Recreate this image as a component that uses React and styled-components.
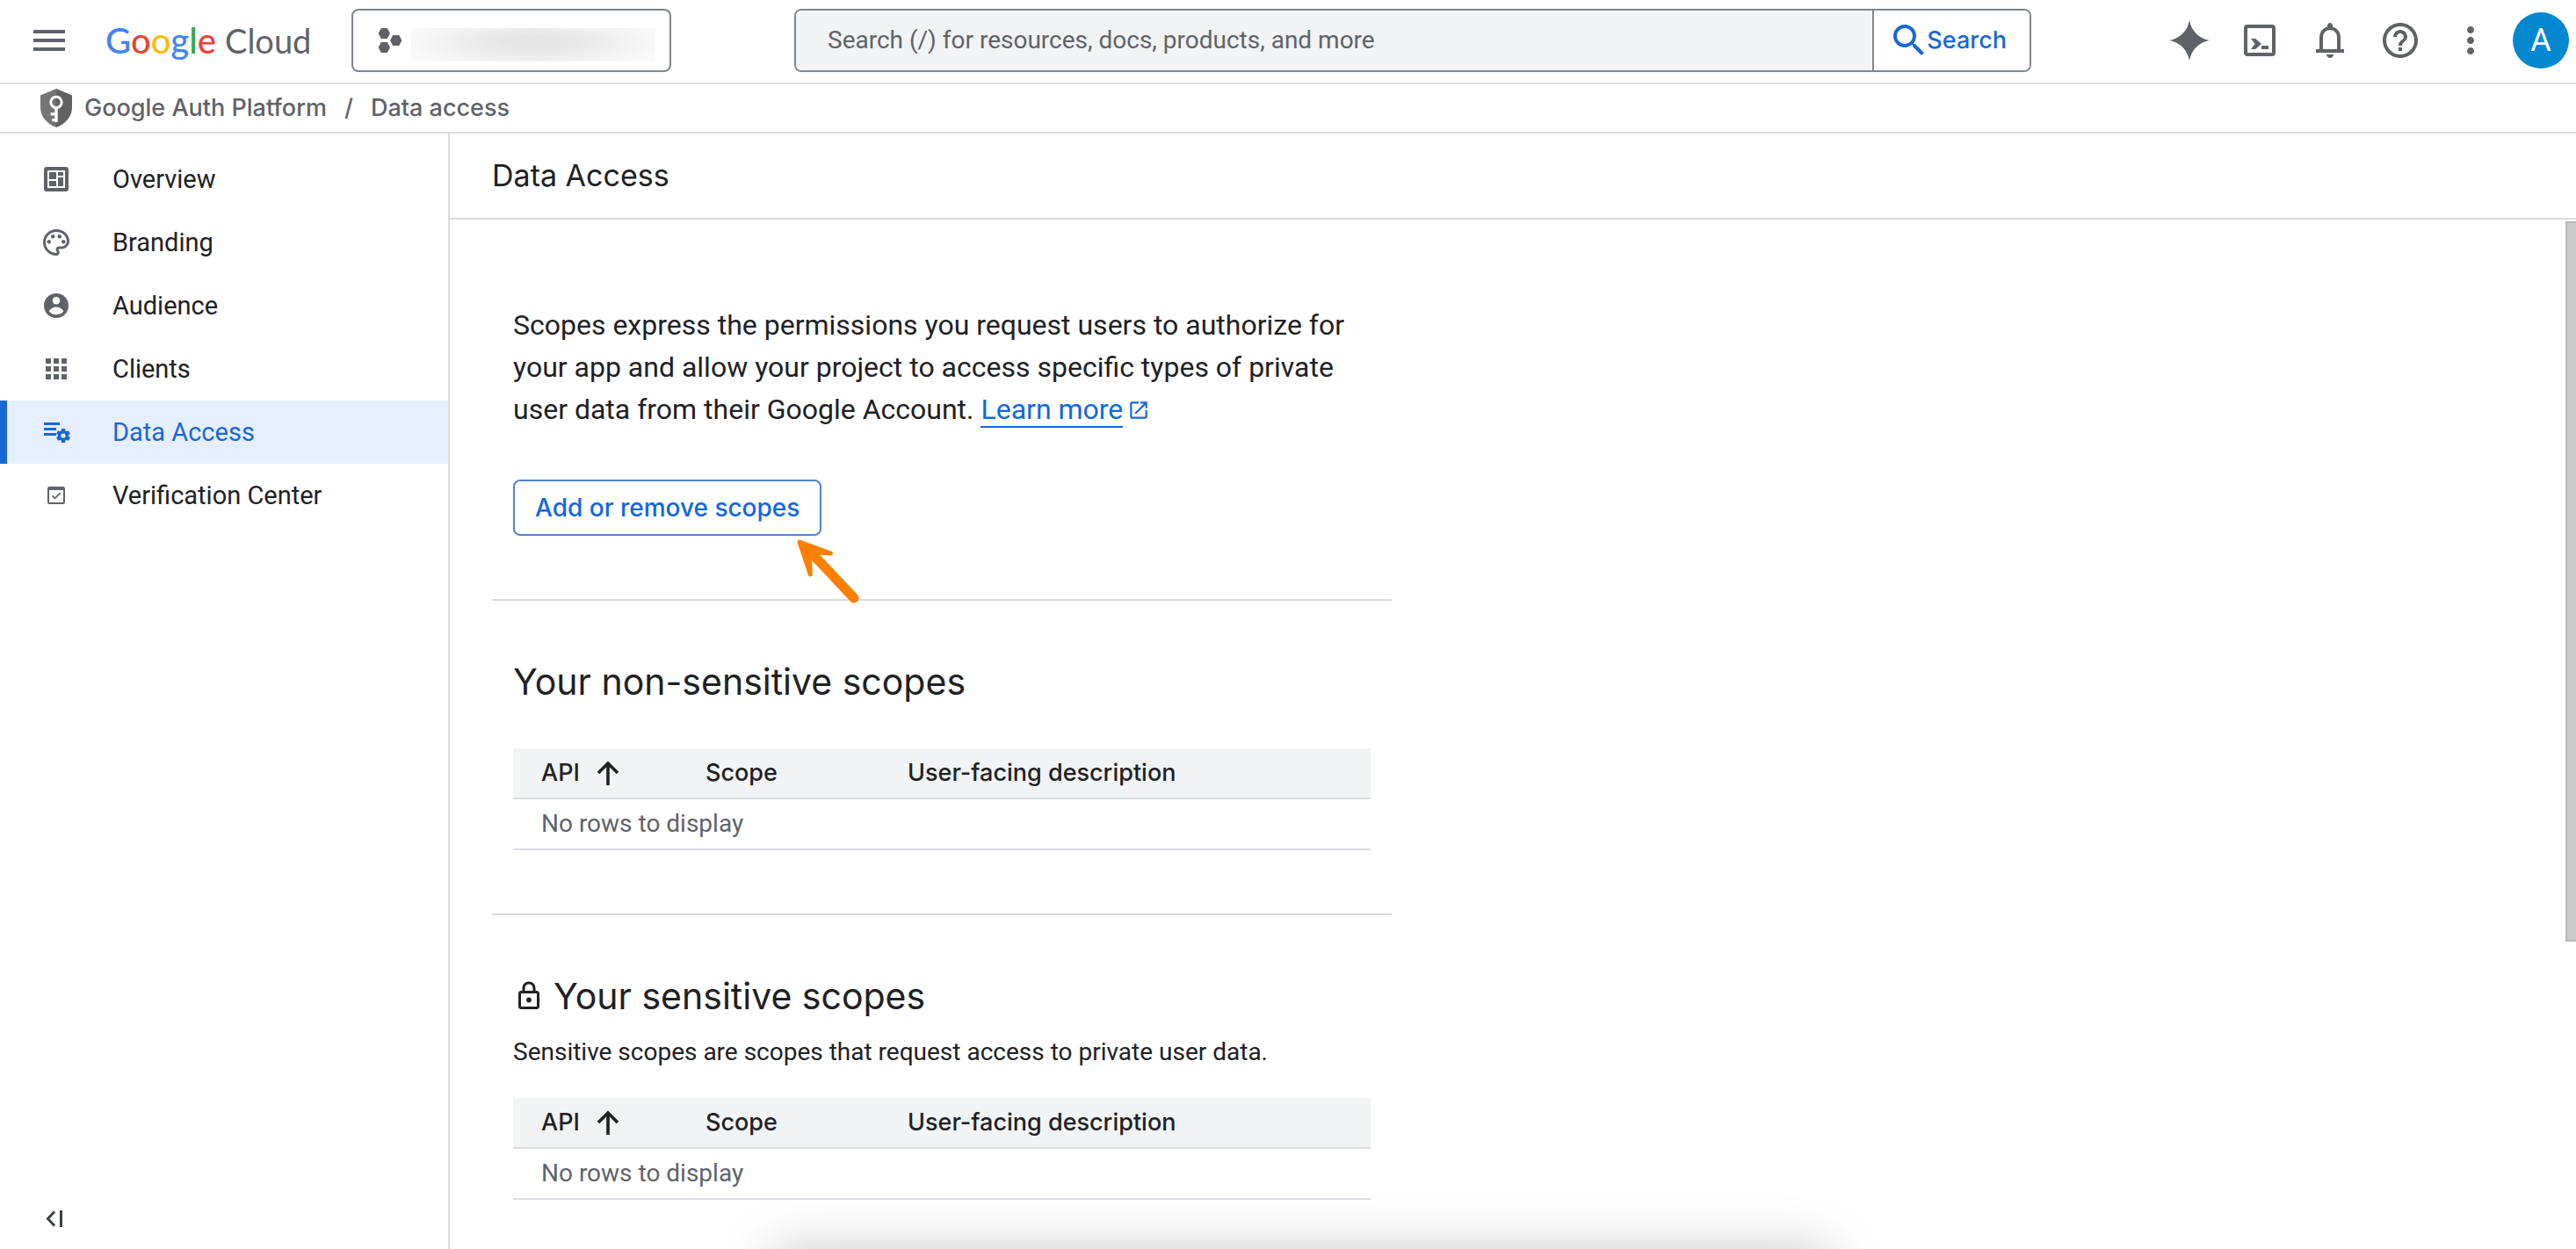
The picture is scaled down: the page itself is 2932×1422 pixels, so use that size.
import React from "react";
import styled, { createGlobalStyle } from "styled-components";
import {
  MdApps,
  MdHelpOutline,
  MdMenu,
  MdMoreVert,
  MdOpenInNew,
  MdOutlineLock,
  MdOutlinePalette,
  MdSearch,
} from "react-icons/md";

const color = {
  text: "#202124",
  muted: "#5f6368",
  line: "#dadce0",
  outline: "#80868b",
  surface: "#f1f3f4",
  link: "#1267e0",
  active: "#1a67d4",
  activeBg: "#e6efff",
  avatar: "#0288d1",
};

const font = {
  body: 'Roboto, "Liberation Sans", sans-serif',
  display: 'Inter, "Liberation Sans", sans-serif',
  brand: 'Lato, "Liberation Sans", sans-serif',
};

const GlobalStyle = createGlobalStyle`
  *, *::before, *::after { box-sizing: border-box; }
  body {
    margin: 0;
    background: #fff;
    color: ${color.text};
    font: 400 28px/40px ${font.body};
  }
  button, input { font: inherit; color: inherit; }
  button { cursor: pointer; }
  h1, h2, p, ul, ol { margin: 0; padding: 0; }
  ul, ol { list-style: none; }
  a { color: inherit; text-decoration: none; }
  svg { display: block; flex: none; }
`;

const Page = styled.div`
  position: relative;
  display: flex;
  flex-direction: column;
  height: 100vh;
  overflow: hidden;
`;

/* ---------- top bar ---------- */

const TopBar = styled.header`
  display: flex;
  align-items: center;
  flex: none;
  height: 96px;
  padding: 0 8px 2px 32px;
  border-bottom: 2px solid ${color.line};
`;

const IconButton = styled.button`
  display: flex;
  padding: 0;
  border: 0;
  background: none;
  color: ${color.muted};
`;

const Brand = styled.a`
  display: flex;
  align-items: baseline;
  gap: 10px;
  flex: none;
  width: 280px;
  margin-left: 40px;
  color: ${color.muted};
  font: 400 38px/48px ${font.brand};
`;

const BrandName = styled.span`
  font-size: 40px;
  font-weight: 500;
`;

const Letter = styled.span`
  color: ${(p) => p.$tone};
`;

const ProjectPicker = styled.button`
  display: flex;
  align-items: center;
  gap: 10px;
  flex: 0 1 364px;
  height: 72px;
  padding: 0 16px 0 28px;
  border: 2px solid ${color.outline};
  border-radius: 8px;
  background: #fff;
  color: ${color.muted};
`;

const HiddenName = styled.span`
  flex: 1;
  height: 38px;
  margin-top: 10px;
  background: radial-gradient(ellipse 54% 90% at 50% 42%, #e6e6e6 20%, #f9f9f9 100%);
`;

const SearchForm = styled.form`
  display: flex;
  flex: 0 1 1408px;
  height: 72px;
  margin-left: 140px;
  border: 2px solid ${color.outline};
  border-radius: 8px;
  overflow: hidden;
`;

const SearchInput = styled.input`
  flex: 1;
  min-width: 0;
  padding: 0 36px;
  border: 0;
  outline: 0;
  background: ${color.surface};
  &::placeholder {
    color: ${color.muted};
    opacity: 1;
  }
`;

const SearchButton = styled.button`
  display: flex;
  align-items: center;
  padding: 0 26px 0 16px;
  border: 0;
  border-left: 2px solid ${color.outline};
  background: #fff;
  color: ${color.active};
  font: 500 27px/40px ${font.display};
  svg { margin-right: -4px; }
`;

const Tools = styled.div`
  display: flex;
  align-items: center;
  gap: 32px;
  margin-left: auto;
`;

const Avatar = styled.button`
  width: 64px;
  height: 64px;
  margin-left: -8px;
  padding: 0;
  border: 0;
  border-radius: 50%;
  background: ${color.avatar};
  color: #fff;
  font-size: 36px;
`;

/* ---------- breadcrumb ---------- */

const Breadcrumb = styled.nav`
  display: flex;
  align-items: center;
  gap: 14px;
  flex: none;
  height: 56px;
  padding: 0 46px;
  border-bottom: 2px solid ${color.line};
  color: ${color.muted};
  font: 500 27px/40px ${font.display};
`;

const Trail = styled.ol`
  display: flex;
  gap: 20px;
`;

/* ---------- body ---------- */

const Body = styled.div`
  display: flex;
  flex: 1;
  min-height: 0;
`;

const Sidebar = styled.nav`
  display: flex;
  flex-direction: column;
  justify-content: space-between;
  flex: none;
  width: 512px;
  padding: 16px 0 24px;
  border-right: 2px solid ${color.line};
`;

const NavLink = styled.a`
  display: flex;
  align-items: center;
  gap: 46px;
  height: 72px;
  padding-left: 38px;
  border-left: 8px solid ${(p) => (p.$active ? color.active : "transparent")};
  background: ${(p) => (p.$active ? color.activeBg : "transparent")};
  color: ${(p) => (p.$active ? color.active : color.text)};
  font-size: 29px;
  svg { color: ${(p) => (p.$active ? color.active : color.muted)}; }
`;

const CollapseButton = styled(IconButton)`
  align-self: flex-start;
  margin-left: 52px;
  color: #3c4043;
`;

const Main = styled.main`
  display: flex;
  flex-direction: column;
  flex: 1;
  min-width: 0;
`;

const TitleBar = styled.div`
  display: flex;
  align-items: center;
  flex: none;
  height: 98px;
  padding: 0 48px;
  border-bottom: 2px solid ${color.line};
`;

const Title = styled.h1`
  font: 400 34px/48px ${font.display};
`;

const Scroller = styled.div`
  position: relative;
  flex: 1;
  min-height: 0;
  overflow: hidden;
`;

const ScrollThumb = styled.div`
  position: absolute;
  top: 2px;
  right: 0;
  width: 12px;
  height: 70%;
  border: 2px solid #b6b6b6;
  border-right: 0;
  background: #cbcbcb;
`;

const Content = styled.div`
  width: 1120px;
  max-width: 100%;
  padding: 0 48px;
`;

const Section = styled.section`
  padding: ${(p) => (p.$intro ? 96 : 60)}px 24px 72px;
  & + & { border-top: 2px solid ${color.line}; }
`;

const Intro = styled.p`
  font-size: 32px;
  line-height: 48px;
  svg {
    display: inline-block;
    margin-left: 5px;
    color: ${color.link};
    vertical-align: -3px;
  }
`;

const TextLink = styled.a`
  border-bottom: 2px solid ${color.link};
  color: ${color.link};
`;

const ActionRow = styled.div`
  position: relative;
  display: inline-flex;
  margin-top: 56px;
  vertical-align: top;
`;

const OutlineButton = styled.button`
  height: 64px;
  padding: 0 23px;
  border: 2px solid #4f83d1;
  border-radius: 8px;
  background: #fff;
  color: ${color.link};
  font: 500 28px/40px ${font.display};
`;

const Pointer = styled.svg`
  position: absolute;
  right: -46px;
  bottom: -78px;
`;

const Heading = styled.h2`
  display: flex;
  align-items: center;
  gap: 10px;
  font: 400 41px/64px ${font.display};
`;

const Note = styled.p`
  margin-top: 12px;
`;

const ScopeTable = styled.table`
  width: 100%;
  margin-top: ${(p) => (p.$afterNote ? 32 : 44)}px;
  border-spacing: 0;
  table-layout: fixed;
  text-align: left;
`;

const HeadCell = styled.th`
  width: ${(p) => p.$width || "auto"};
  height: 58px;
  padding: 0 0 0 32px;
  border-bottom: 2px solid ${color.line};
  background: ${color.surface};
  font: 500 27px/40px ${font.display};
`;

const SortButton = styled.button`
  display: flex;
  align-items: center;
  gap: 14px;
  padding: 0;
  border: 0;
  background: none;
`;

const EmptyCell = styled.td`
  height: 58px;
  padding: 0 32px;
  border-bottom: 2px solid ${color.line};
  color: ${color.muted};
`;

/* shade of the dock that sits below the window edge */
const DockShade = styled.div`
  position: absolute;
  right: 29%;
  bottom: -46px;
  left: 30%;
  height: 42px;
  box-shadow: 0 0 62px rgba(0, 0, 0, 0.27);
  pointer-events: none;
`;

/* ---------- icons ---------- */

const Svg24 = ({ children }) => (
  <svg width="48" height="48" viewBox="0 0 24 24" fill="currentColor" aria-hidden="true">{children}</svg>
);

const Svg36 = ({ children }) => (
  <svg width="36" height="36" viewBox="0 0 36 36" fill="currentColor" aria-hidden="true">{children}</svg>
);

const SparkIcon = () => (
  <Svg24><path d="M12 .5C13 6.5 17.5 11 23.5 12 17.5 13 13 17.5 12 23.5 11 17.5 6.5 13 .5 12 6.5 11 11 6.5 12 .5z" /></Svg24>
);

const ShellIcon = () => (
  <Svg24>
    <rect x="4" y="4" width="16" height="16" rx="1" fill="none" stroke="currentColor" strokeWidth="2" />
    <path d="M7 11h2.6L13 14l-3.4 3H7l2.3-3zM13 15h4v2h-4z" />
  </Svg24>
);

const BellIcon = () => (
  <Svg24>
    <path d="M4 19v-2h2v-7q0-2.075 1.25-3.687T10.5 4.2v-.7q0-.625.438-1.062T12 2t1.063.438T13.5 3.5v.7q2 .5 3.25 2.113T18 10v7h2v2zm8 3q-.825 0-1.412-.587T10 20h4q0 .825-.587 1.413T12 22m-4-5h8v-7q0-1.65-1.175-2.825T12 6 9.175 7.175 8 10z" />
  </Svg24>
);

const ProjectIcon = () => (
  <svg width="28" height="28" viewBox="0 0 28 28" fill="currentColor" aria-hidden="true">
    {[[7.3, 6], [20.7, 14], [7.3, 22]].map(([x, y]) => (
      <path key={`${x}-${y}`} d={`M${x - 6.7} ${y}l3.2-6h7l3.2 6-3.2 6h-7z`} />
    ))}
  </svg>
);

const ShieldIcon = () => (
  <svg width="36" height="44" viewBox="0 0 36 44" aria-hidden="true">
    <path d="M18 0L0 7.500V21c0 11 8 19.500 18 23z" fill="#757575" />
    <path d="M18 0l18 7.500V21c0 11-8 19.500-18 23z" fill="#616161" />
    <circle cx="18" cy="15.500" r="6.200" fill="none" stroke="#fff" strokeWidth="3" />
    <path d="M16.300 22h3.400v16h-3.400v-.7h-3v-3.200h3v-3.500h-4.600v-3.400h4.600z" fill="#fff" />
  </svg>
);

const SortIcon = () => (
  <Svg36>
    <path d="M18 32V7M7 18L18 7l11 11" fill="none" stroke="currentColor" strokeWidth="3.600" />
  </Svg36>
);

const OverviewIcon = () => (
  <Svg36>
    <rect x="6" y="6" width="24" height="24" rx="1" fill="none" stroke="currentColor" strokeWidth="4" />
    <path d="M10 10h8v8h-8zM20 10h6v4h-6zM10 20h8v6h-8zM20 16h6v10h-6z" />
  </Svg36>
);

const AudienceIcon = () => (
  <Svg36>
    <circle cx="18" cy="18" r="14" />
    <circle cx="18" cy="12.300" r="4.200" fill="#fff" />
    <path d="M9.700 24.300c1.800-3 5.300-4.900 8.300-4.900s6.500 1.900 8.300 4.900c-1.800 2.600-4.800 4-8.300 4s-6.500-1.400-8.300-4z" fill="#fff" />
  </Svg36>
);

const DataAccessIcon = () => (
  <Svg36>
    <path d="M4 7h18v3H4zM4 13h14v3H4zM4 19h14v3H4z" />
    <circle cx="26" cy="22" r="4.300" fill="none" stroke="currentColor" strokeWidth="3.400" />
    {[0, 60, 120, 180, 240, 300].map((a) => (
      <path key={a} d="M24 14h4l.7 4h-5.400z" transform={`rotate(${a} 26 22)`} />
    ))}
  </Svg36>
);

const VerificationIcon = () => (
  <Svg36>
    <rect x="9" y="9" width="18" height="18" rx="1.500" fill="none" stroke="currentColor" strokeWidth="2" />
    <path d="M9 8h18v4H9z" />
    <path d="M13.500 18.300l3 3 6.200-6" fill="none" stroke="currentColor" strokeWidth="1.800" />
  </Svg36>
);

const CollapseIcon = () => (
  <svg width="20" height="20" viewBox="0 0 20 20" fill="none" stroke="currentColor" strokeWidth="3" aria-hidden="true">
    <path d="M10 1.500L2.500 9.500l7.500 8M17.500 0v19" />
  </svg>
);

/* ---------- data ---------- */

const brandLetters = [
  ["G", "#4285f4"],
  ["o", "#ea4335"],
  ["o", "#fbbc04"],
  ["g", "#4285f4"],
  ["l", "#34a853"],
  ["e", "#ea4335"],
];

const navItems = [
  { label: "Overview", icon: <OverviewIcon /> },
  { label: "Branding", icon: <MdOutlinePalette size={36} /> },
  { label: "Audience", icon: <AudienceIcon /> },
  { label: "Clients", icon: <MdApps size={36} /> },
  { label: "Data Access", icon: <DataAccessIcon />, active: true },
  { label: "Verification Center", icon: <VerificationIcon /> },
];

const tools = [
  { label: "Gemini", icon: <SparkIcon /> },
  { label: "Cloud Shell", icon: <ShellIcon /> },
  { label: "Notifications", icon: <BellIcon /> },
  { label: "Help", icon: <MdHelpOutline size={48} /> },
  { label: "More options", icon: <MdMoreVert size={48} /> },
];

function Scopes({ afterNote }) {
  return (
    <ScopeTable $afterNote={afterNote}>
      <thead>
        <tr>
          <HeadCell $width="187px" aria-sort="ascending">
            <SortButton type="button">API <SortIcon /></SortButton>
          </HeadCell>
          <HeadCell $width="230px">Scope</HeadCell>
          <HeadCell>User-facing description</HeadCell>
        </tr>
      </thead>
      <tbody>
        <tr>
          <EmptyCell colSpan={3}>No rows to display</EmptyCell>
        </tr>
      </tbody>
    </ScopeTable>
  );
}

export default function App() {
  return (
    <Page>
      <GlobalStyle />
      <TopBar>
        <IconButton aria-label="Main menu"><MdMenu size={48} /></IconButton>
        <Brand href="#home">
          <BrandName>
            {brandLetters.map(([letter, tone], i) => (
              <Letter key={i} $tone={tone}>{letter}</Letter>
            ))}
          </BrandName>
          Cloud
        </Brand>
        <ProjectPicker aria-label="Select a project">
          <ProjectIcon />
          <HiddenName />
        </ProjectPicker>
        <SearchForm role="search">
          <SearchInput
            type="text"
            aria-label="Search"
            placeholder="Search (/) for resources, docs, products, and more"
          />
          <SearchButton type="button"><MdSearch size={48} />Search</SearchButton>
        </SearchForm>
        <Tools>
          {tools.map((t) => (
            <IconButton key={t.label} aria-label={t.label}>{t.icon}</IconButton>
          ))}
          <Avatar aria-label="Account">A</Avatar>
        </Tools>
      </TopBar>

      <Breadcrumb aria-label="Breadcrumb">
        <ShieldIcon />
        <Trail>
          <li><a href="#auth">Google Auth Platform</a></li>
          <li aria-hidden="true">/</li>
          <li>Data access</li>
        </Trail>
      </Breadcrumb>

      <Body>
        <Sidebar aria-label="Google Auth Platform">
          <ul>
            {navItems.map((item) => (
              <li key={item.label}>
                <NavLink href="#section" $active={item.active} aria-current={item.active ? "page" : undefined}>
                  {item.icon}
                  {item.label}
                </NavLink>
              </li>
            ))}
          </ul>
          <CollapseButton aria-label="Collapse navigation"><CollapseIcon /></CollapseButton>
        </Sidebar>

        <Main>
          <TitleBar><Title>Data Access</Title></TitleBar>
          <Scroller>
            <Content>
              <Section $intro>
                <Intro>
                  Scopes express the permissions you request users to authorize for your app and allow
                  your project to access specific types of private user data from their Google
                  Account. <TextLink href="#learn">Learn more</TextLink>
                  <MdOpenInNew size={26} aria-hidden="true" />
                </Intro>
                <ActionRow>
                  <OutlineButton>Add or remove scopes</OutlineButton>
                  <Pointer width="76" height="76" viewBox="0 0 76 76" aria-hidden="true">
                    <path d="M20 19l47 50" stroke="#ff8000" strokeWidth="11" strokeLinecap="round" />
                    <path
                      d="M5 5l12.300 37-.8-18L26 17l14.500 1z"
                      fill="#ff8000"
                      stroke="#ff8000"
                      strokeWidth="5"
                      strokeLinejoin="round"
                    />
                  </Pointer>
                </ActionRow>
              </Section>
              <Section>
                <Heading>Your non-sensitive scopes</Heading>
                <Scopes />
              </Section>
              <Section>
                <Heading><MdOutlineLock size={36} />Your sensitive scopes</Heading>
                <Note>Sensitive scopes are scopes that request access to private user data.</Note>
                <Scopes afterNote />
              </Section>
            </Content>
            <ScrollThumb aria-hidden="true" />
          </Scroller>
        </Main>
      </Body>
      <DockShade aria-hidden="true" />
    </Page>
  );
}
